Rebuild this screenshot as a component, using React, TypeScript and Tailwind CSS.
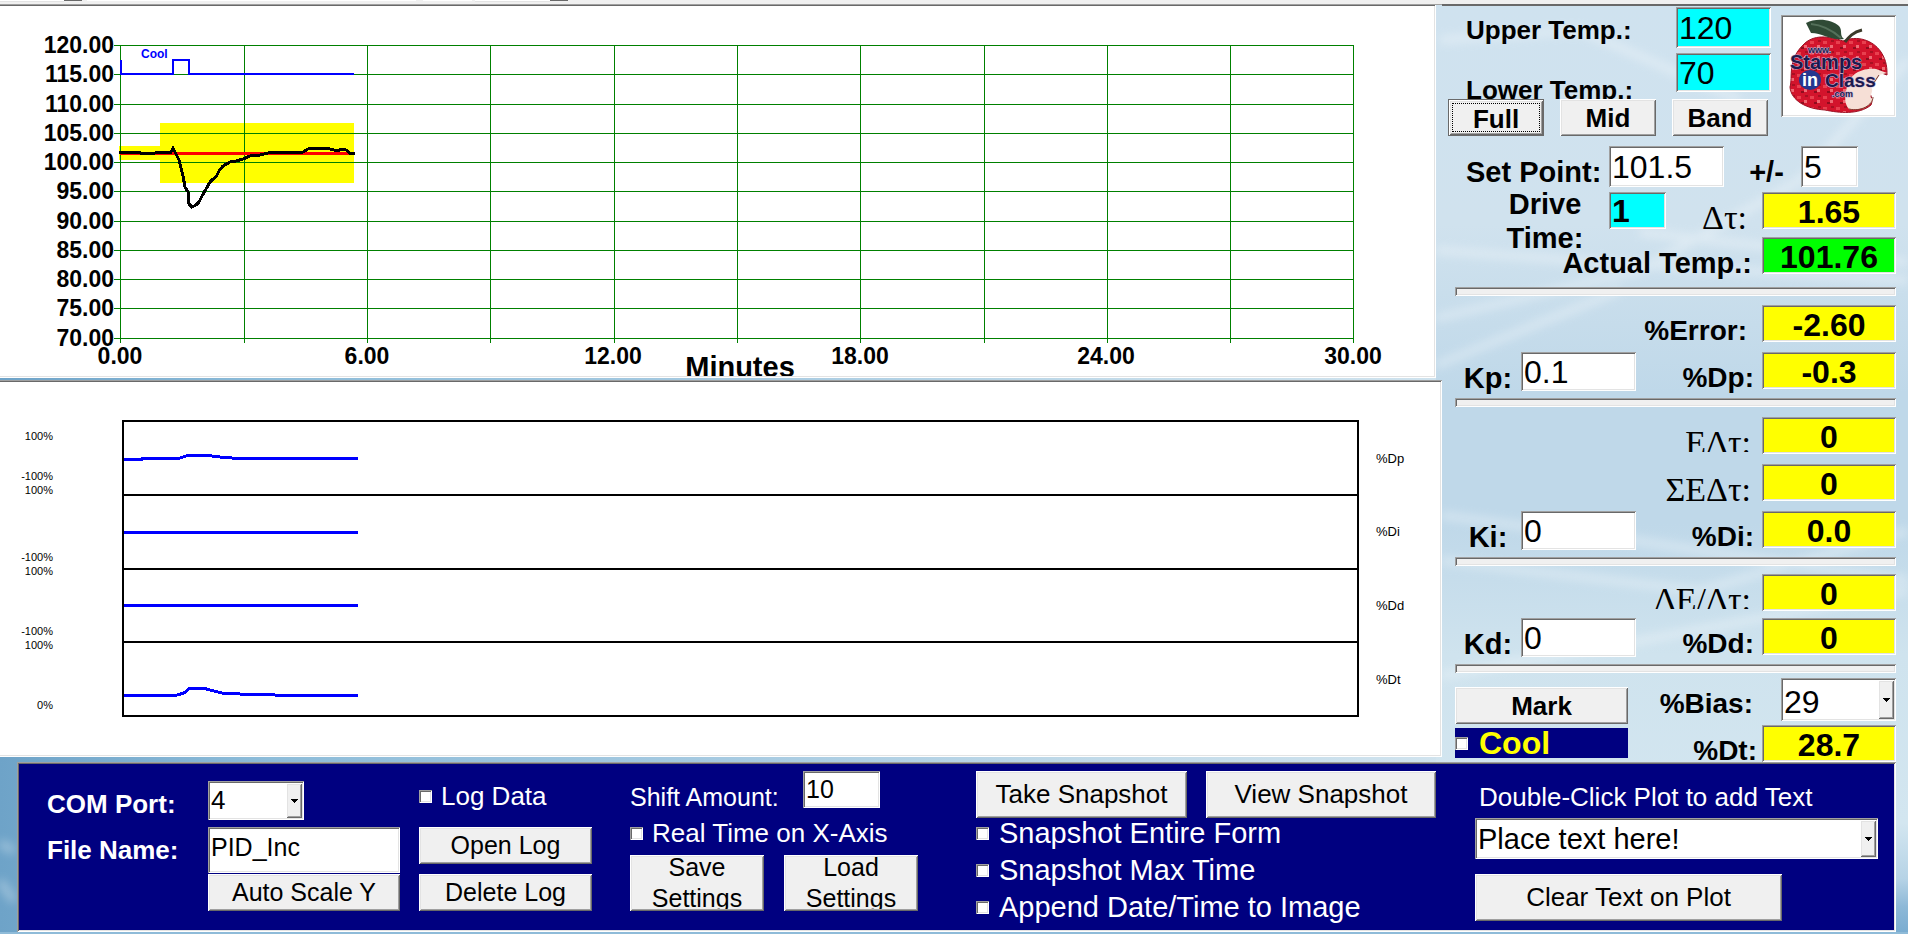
import { useState } from "react"
import type { ReactNode } from "react"
import { clsx } from "clsx"

// classic two-tone window edges
const sunken =
  "shadow-[inset_1px_1px_0_#a0a0a0,inset_-1px_-1px_0_#ffffff,inset_2px_2px_0_#696969,inset_-2px_-2px_0_#e3e3e3]"
const raised =
  "shadow-[inset_1px_1px_0_#ffffff,inset_-1px_-1px_0_#696969,inset_2px_2px_0_#e3e3e3,inset_-2px_-2px_0_#a0a0a0]"

const yTicks = [120, 115, 110, 105, 100, 95, 90, 85, 80, 75, 70]
const xTicks = [0, 3, 6, 9, 12, 15, 18, 21, 24, 27, 30]

const driveBands = [
  { label: "%Dp", y: 458 },
  { label: "%Di", y: 531 },
  { label: "%Dd", y: 605 },
  { label: "%Dt", y: 679 },
]

const driveScale = [
  { label: "100%", y: 439 },
  { label: "-100%", y: 479 },
  { label: "100%", y: 493 },
  { label: "-100%", y: 560 },
  { label: "100%", y: 574 },
  { label: "-100%", y: 634 },
  { label: "100%", y: 648 },
  { label: "0%", y: 708 },
]

function Backdrop() {
  return (
    <svg
      className="absolute inset-0 -z-10 h-full w-full"
      viewBox="0 0 1908 934"
      preserveAspectRatio="none"
      aria-hidden="true"
    >
      <defs>
        <linearGradient id="across" x1="0" x2="1" y1="0" y2="0">
          <stop offset="0%" stopColor="#6ea3c8" />
          <stop offset="14%" stopColor="#8dbcd9" />
          <stop offset="38%" stopColor="#a6cae1" />
          <stop offset="60%" stopColor="#c4dcea" />
          <stop offset="76%" stopColor="#d0e3ee" />
          <stop offset="100%" stopColor="#cfe2ee" />
        </linearGradient>
        <linearGradient id="down" x1="0" x2="0" y1="0" y2="1">
          <stop offset="0%" stopColor="#cfe2ef" />
          <stop offset="24%" stopColor="#d0e2ee" />
          <stop offset="42%" stopColor="#bfd8e9" />
          <stop offset="56%" stopColor="#bfd8e9" />
          <stop offset="70%" stopColor="#cfe3ee" />
          <stop offset="88%" stopColor="#d3e6f0" />
          <stop offset="94%" stopColor="#b6d3e6" />
          <stop offset="97%" stopColor="#8db8d7" />
          <stop offset="100%" stopColor="#78abd0" />
        </linearGradient>
        <filter id="soft" x="-10%" y="-10%" width="120%" height="120%">
          <feGaussianBlur stdDeviation="5" />
        </filter>
      </defs>
      <rect width="1908" height="934" fill="url(#across)" />
      <rect x="1436" width="472" height="934" fill="url(#down)" />
      <rect y="931" width="1908" height="3" fill="#8fbbd8" />
      <g filter="url(#soft)" fill="none" stroke="#ffffff" strokeWidth="8" opacity="0.32">
        <path d="M1436 318 L1640 270 L1800 180 L1908 60" />
        <path d="M1436 365 L1620 290" />
        <path d="M1440 40 L1580 30 L1740 100" />
        <path d="M1436 250 L1600 262 L1908 280" />
        <path d="M1640 232 L1908 262" />
        <path d="M1441 515 L1600 535 L1908 580" />
        <path d="M1441 560 L1700 590 L1908 530" />
        <path d="M1441 675 L1640 640 L1908 590" />
        <path d="M0 842 L14 850 M0 880 L14 900" />
      </g>
    </svg>
  )
}

function AppleLogo() {
  return (
    <svg viewBox="0 0 111 98" className="h-full w-full" role="img" aria-label="Stamps in Class">
      <defs>
        <pattern id="speckle" width="13" height="11" patternUnits="userSpaceOnUse">
          <rect width="13" height="11" fill="#d3142c" />
          <rect x="1" y="2" width="4" height="3" fill="#e8404f" />
          <rect x="8" y="6" width="3" height="3" fill="#ee6a74" />
          <rect x="5" y="8" width="3" height="2" fill="#8f0d1e" />
          <rect x="9" y="1" width="3" height="2" fill="#a81022" />
        </pattern>
      </defs>
      <path
        d="M20 28 C30 17 46 19 60 24 C74 18 90 23 98 35 C104 44 104 52 104 58 L96 55 C90 53 84 60 86 66 C82 72 92 80 88 88 C76 98 56 96 42 93 C24 92 8 84 7 70 C10 60 4 44 20 28 Z"
        fill="url(#speckle)"
        stroke="#9b1022"
      />
      <path
        d="M104 56 L93 52 C80 51 70 56 66 64 C62 74 60 86 66 92 C76 94 88 90 90 82 C84 80 92 75 88 70 C92 66 95 62 96 58 Z"
        fill="#f6dfd6"
      />
      <path d="M66 92 C78 95 90 88 90 80 M96 58 L88 70" fill="none" stroke="#7d3a2c" />
      <path d="M23 6 C34 0 50 3 56 9 C60 14 56 18 61 22 C48 24 40 16 28 16 Z" fill="#2f4a35" />
      <path d="M28 7 C40 8 50 14 58 21" fill="none" stroke="#54705a" strokeWidth="2" />
      <path d="M62 25 C66 20 70 15 79 13" fill="none" stroke="#3b3a2a" strokeWidth="3" />
      <g
        fontFamily="Liberation Sans, Arial, sans-serif"
        fontWeight="700"
        fill="#1c1a4e"
        stroke="#c7b6dc"
        strokeWidth="1"
        paintOrder="stroke"
      >
        <text x="25" y="36" fontSize="9">www.</text>
        <text x="7" y="52" fontSize="20">Stamps</text>
        <text x="42" y="70" fontSize="19">Class</text>
        <text x="49" y="80" fontSize="9">.com</text>
      </g>
      <ellipse cx="27" cy="63" rx="11" ry="10" fill="#26368f" />
      <text
        x="27"
        y="69"
        textAnchor="middle"
        fontSize="18"
        fontWeight="700"
        fontFamily="Liberation Sans, Arial, sans-serif"
        fill="#ffffff"
      >
        in
      </text>
    </svg>
  )
}

function TemperaturePlot() {
  return (
    <svg
      viewBox="0 4 1436 374"
      className="block h-auto w-full overflow-hidden"
      fontFamily="Liberation Sans, Arial, sans-serif"
      fontWeight="700"
      role="img"
      aria-label="Temperature plot"
    >
      <g shapeRendering="crispEdges">
        <rect x="119" y="146" width="41" height="14" fill="#ffff00" />
        <rect x="160" y="123" width="194" height="60" fill="#ffff00" />
        <g stroke="#008000" strokeWidth="1">
          {yTicks.map((t, i) => {
            const y = Math.round(45 + i * 29.25) + 0.5
            return <line key={t} x1="114" x2="1354" y1={y} y2={y} />
          })}
          {xTicks.map((t, i) => {
            const x = Math.ceil(120 + i * 123.3) + 0.5
            return <line key={t} x1={x} x2={x} y1="45" y2="343" />
          })}
        </g>
        <polyline
          points="121,60 121,74 173,74 173,60 189,60 189,74 354,74"
          fill="none"
          stroke="#0000ff"
          strokeWidth="2"
        />
        <line x1="120" x2="355" y1="153.5" y2="153.5" stroke="#ff0000" strokeWidth="3" />
        <polyline
          points="119,152 138,152 143,154 147,153 150,154 155,153 162,152 171,152 173,148 175,152 179,160 181,168 183,176 185,187 188,192 189,204 192,207 196,205 199,202 202,196 206,189 210,182 213,179 216,177 219,171 223,166 230,162 236,161 243,159 250,156 260,155 268,153 275,152 303,152 308,149 318,148 330,149 338,151 341,149 346,150 350,153 355,153"
          fill="none"
          stroke="#000000"
          strokeWidth="3"
        />
      </g>
      <text x="141" y="58" fontSize="12" fill="#0000ff">Cool</text>
      <g fontSize="23" textAnchor="end">
        {yTicks.map((t, i) => (
          <text key={t} x="114" y={Math.round(53 + i * 29.25)}>{t.toFixed(2)}</text>
        ))}
      </g>
      <g fontSize="23" textAnchor="middle">
        {xTicks.filter((t) => t % 6 === 0).map((t) => (
          <text key={t} x={Math.round(120 + t * 41.1)} y="364">{t.toFixed(2)}</text>
        ))}
      </g>
      {/* the axis title runs past the lower edge of the plot */}
      <svg x="600" y="340" width="300" height="36">
        <text x="140" y="37" fontSize="29" textAnchor="middle">Minutes</text>
      </svg>
    </svg>
  )
}

function DrivePlot() {
  return (
    <svg
      viewBox="0 379 1442 377"
      className="block h-auto w-full"
      fontFamily="Liberation Sans, Arial, sans-serif"
      role="img"
      aria-label="Drive plot"
    >
      <g fill="none" stroke="#000000" strokeWidth="2" shapeRendering="crispEdges">
        <rect x="123" y="420" width="1235" height="295" />
        <path d="M123 494 H1358 M123 568 H1358 M123 641 H1358" />
      </g>
      <g fill="none" stroke="#0000ff" strokeWidth="3" shapeRendering="crispEdges">
        <polyline points="124,458 142,458 143,457 180,457 186,455 190,454 207,454 212,455 220,456 232,457 358,457" />
        <path d="M124 531.5 H358 M124 604.5 H358" />
        <polyline points="124,694 177,694 184,692 190,687 203,687 210,689 222,692 240,693 275,694 358,694" />
      </g>
      <g fontSize="11" textAnchor="end">
        {driveScale.map((s) => (
          <text key={s.y} x="53" y={s.y}>{s.label}</text>
        ))}
      </g>
      <g fontSize="13">
        {driveBands.map((b) => (
          <text key={b.label} x="1376" y={b.y + 4}>{b.label}</text>
        ))}
      </g>
    </svg>
  )
}

function Btn({ children, className }: { children: ReactNode; className?: string }) {
  return (
    <button
      type="button"
      className={clsx("overflow-hidden bg-[#f0f0f0] text-black", raised, className)}
    >
      {children}
    </button>
  )
}

function Field({ id, value, className }: { id: string; value: string; className?: string }) {
  return (
    <input
      id={id}
      type="text"
      defaultValue={value}
      className={clsx("min-w-0 rounded-none pl-[3px] text-black outline-none", sunken, className)}
    />
  )
}

function Combo({
  id,
  options,
  className,
  textClass,
}: {
  id: string
  options: string[]
  className?: string
  textClass: string
}) {
  return (
    <div className={clsx("relative bg-white", sunken, className)}>
      <select
        id={id}
        className={clsx(
          "h-full w-full appearance-none bg-transparent pr-5 pl-[3px] text-black outline-none",
          textClass
        )}
      >
        {options.map((o) => (
          <option key={o}>{o}</option>
        ))}
      </select>
      <span
        className={clsx(
          "pointer-events-none absolute inset-y-[2px] right-[2px] flex w-4 items-center justify-center bg-[#f0f0f0]",
          raised
        )}
      >
        <svg width="7" height="4" viewBox="0 0 7 4" shapeRendering="crispEdges">
          <path d="M0 0 H7 L3.500 4 Z" />
        </svg>
      </span>
    </div>
  )
}

function Check({
  label,
  className,
  boxClass,
}: {
  label: string
  className?: string
  boxClass?: string
}) {
  const [on, setOn] = useState(false)
  return (
    <label className={clsx("flex items-center whitespace-nowrap", className)}>
      <input
        type="checkbox"
        checked={on}
        onChange={(e) => setOn(e.target.checked)}
        className={clsx(
          "size-[13px] shrink-0 appearance-none bg-white checked:bg-gray-500",
          sunken,
          boxClass
        )}
      />
      {label}
    </label>
  )
}

function Readout({
  id,
  label,
  value,
  labelClass = "pr-2 text-[28px]",
  green,
  clip,
}: {
  id: string
  label: string
  value: string
  labelClass?: string
  green?: boolean
  clip?: boolean
}) {
  return (
    <>
      <label
        htmlFor={id}
        className={clsx(
          "flex-1 pt-[10px] text-right leading-8 whitespace-nowrap",
          labelClass,
          clip ? "h-[35px] overflow-hidden" : "h-[37px]"
        )}
      >
        {label}
      </label>
      <output
        id={id}
        className={clsx(
          "h-[37px] w-[134px] shrink-0 pt-[2px] text-center text-[32px] leading-[37px]",
          green ? "bg-[#00ff00]" : "bg-[#ffff00]",
          sunken
        )}
      >
        {value}
      </output>
    </>
  )
}

const greek = "pr-[11px] font-['Liberation_Serif',serif] text-[34px] font-normal"

function Gain({ id, label, value }: { id: string; label: string; value: string }) {
  return (
    <>
      <label htmlFor={id} className="w-[66px] pt-[10px] text-center text-[29px] leading-8">
        {label}
      </label>
      <Field id={id} value={value} className="h-[39px] w-[115px] bg-white text-[32px] font-normal" />
    </>
  )
}

function Row({ children }: { children: ReactNode }) {
  return <div className="flex h-[37px] items-start">{children}</div>
}

function Divider() {
  return <div className={clsx("h-[9px] bg-[#f0f0f0]", sunken)} />
}

function SidePanel() {
  return (
    <aside className="w-[466px] shrink-0 pt-px font-bold">
      <div className="flex justify-between pr-3 pl-[6px]">
        <div className="w-[323px]">
          <div className="mb-[5px] flex h-[41px] justify-between pl-[18px]">
            <label htmlFor="upper" className="pt-[7px] text-[26px] leading-8">Upper Temp.:</label>
            <Field id="upper" value="120" className="w-[95px] bg-[#00ffff] text-[32px] font-normal" />
          </div>
          <div className="flex h-[46px] items-start justify-between overflow-hidden pl-[18px]">
            <label htmlFor="lower" className="pt-[21px] text-[26px] leading-8">Lower Temp.:</label>
            <Field id="lower" value="70" className="h-[39px] w-[95px] bg-[#00ffff] text-[32px] font-normal" />
          </div>
          <div className="flex h-[37px] gap-4 text-[26px]">
            <Btn className="w-24 border border-[#696969] outline-1 -outline-offset-[5px] outline-black outline-dotted">
              Full
            </Btn>
            <Btn className="w-24">Mid</Btn>
            <Btn className="w-24">Band</Btn>
          </div>
        </div>
        <div className={clsx("mt-2 h-[102px] w-[115px] bg-white p-[2px]", sunken)}>
          <AppleLogo />
        </div>
      </div>

      <div className="pr-3 pl-[13px]">
        <div className="mt-[10px] flex h-[41px]">
          <label htmlFor="setpoint" className="w-[154px] pt-[10px] pl-[11px] text-[29px] leading-8">
            Set Point:
          </label>
          <Field id="setpoint" value="101.5" className="w-[115px] bg-white text-[32px] font-normal" />
          <label htmlFor="band" className="flex-1 pt-[10px] pl-2 text-center text-[29px] leading-8">
            +/-
          </label>
          <Field id="band" value="5" className="mr-[38px] w-[57px] bg-white text-[32px] font-normal" />
        </div>
        <div className="flex h-[42px] items-end">
          <label
            htmlFor="drive"
            className="w-[154px] self-start pl-[26px] text-center text-[29px] leading-[34px]"
          >
            Drive Time:
          </label>
          <Field id="drive" value="1" className="h-[37px] w-[57px] bg-[#00ffff] text-[32px]" />
          <Readout
            id="dtau"
            label="Δτ:"
            value="1.65"
            labelClass="pr-[15px] font-['Liberation_Serif',serif] text-[34px] font-normal"
          />
        </div>
        <div className="mt-2 mb-[13px]">
          <Row>
            <Readout
              id="actual"
              label="Actual Temp.:"
              value="101.76"
              labelClass="pr-[10px] text-[29px]"
              green
            />
          </Row>
        </div>
        <Divider />
        <div className="flex flex-col gap-[10px] py-[9px]">
          <Row>
            <Readout id="error" label="%Error:" value="-2.60" labelClass="pr-[15px] text-[28px]" />
          </Row>
          <Row>
            <Gain id="kp" label="Kp:" value="0.1" />
            <Readout id="dp" label="%Dp:" value="-0.3" />
          </Row>
        </div>
        <Divider />
        <div className="flex flex-col gap-[10px] pt-[10px] pb-[9px]">
          <Row>
            <Readout id="edt" label="EΔτ:" value="0" labelClass={greek} clip />
          </Row>
          <Row>
            <Readout id="sedt" label="ΣEΔτ:" value="0" labelClass={greek} />
          </Row>
          <Row>
            <Gain id="ki" label="Ki:" value="0" />
            <Readout id="di" label="%Di:" value="0.0" />
          </Row>
        </div>
        <Divider />
        <div className="flex flex-col gap-[7px] pt-2 pb-[9px]">
          <Row>
            <Readout id="dedt" label="ΔE/Δτ:" value="0" labelClass={greek} clip />
          </Row>
          <Row>
            <Gain id="kd" label="Kd:" value="0" />
            <Readout id="dd" label="%Dd:" value="0" />
          </Row>
        </div>
        <Divider />
        <div className="mt-[5px] flex h-[43px] items-start">
          <Btn className="mt-[9px] h-[37px] w-[173px] text-[26px]">Mark</Btn>
          <label htmlFor="bias" className="flex-1 pt-[10px] pr-7 text-right text-[28px] leading-8">
            %Bias:
          </label>
          <Combo
            id="bias"
            options={["29", "30", "31"]}
            className="h-[43px] w-[115px]"
            textClass="text-[32px] font-normal"
          />
        </div>
        <div className="mt-1 flex h-[37px] items-start overflow-hidden">
          <Check
            label="Cool"
            className="mt-[3px] h-[30px] w-[173px] bg-[#000080] text-[32px] leading-[30px] text-[#ffff00]"
            boxClass="mr-[11px]"
          />
          <Readout id="dt" label="%Dt:" value="28.7" labelClass="pr-[5px] text-[28px]" />
        </div>
      </div>
    </aside>
  )
}

function ControlPanel() {
  return (
    <section
      className={clsx(
        "mr-3 mb-[3px] ml-[17px] grid h-[170px] grid-cols-[minmax(0,161fr)_minmax(0,211fr)_minmax(0,211fr)_minmax(0,346fr)_minmax(0,499fr)_minmax(0,403fr)] bg-[#000080] pt-[9px] pr-[18px] pl-[30px] text-[26px] text-white",
        sunken
      )}
    >
      <div className="flex flex-col gap-[14px] pt-[17px] font-bold leading-8 whitespace-nowrap">
        <label htmlFor="port">COM Port:</label>
        <label htmlFor="file">File Name:</label>
      </div>

      <div className="flex flex-col pt-[10px] pr-[19px] text-[25px]">
        <Combo id="port" options={["4", "5", "6"]} className="mb-[7px] h-[39px] w-24" textClass="text-[26px]" />
        <Field id="file" value="PID_Inc" className="mb-px h-[46px] bg-white pb-[6px]" />
        <Btn className="h-[37px]">Auto Scale Y</Btn>
      </div>

      <div className="flex flex-col pt-[9px] pr-[38px] text-[25px]">
        <Check label="Log Data" className="mb-[15px] h-8 text-[26px]" boxClass="mr-[9px]" />
        <Btn className="mb-[10px] h-[37px]">Open Log</Btn>
        <Btn className="h-[37px]">Delete Log</Btn>
      </div>

      <div className="pr-[58px] text-[25px]">
        <div className="mb-[9px] flex h-[37px]">
          <label htmlFor="shift" className="w-[173px] pt-[10px] leading-8">Shift Amount:</label>
          <Field id="shift" value="10" className="w-[77px] bg-white" />
        </div>
        <Check label="Real Time on X-Axis" className="mb-[6px] h-8 text-[26px]" boxClass="mr-[9px]" />
        <div className="flex gap-5 leading-[31px]">
          <Btn className="h-[56px] w-[134px] p-[2px]">
            <span className="flex h-[52px] items-center overflow-hidden px-2">Save Settings</span>
          </Btn>
          <Btn className="h-[56px] w-[134px] p-[2px]">
            <span className="flex h-[52px] items-center overflow-hidden px-2">Load Settings</span>
          </Btn>
        </div>
      </div>

      <div className="pr-[39px]">
        <div className="-mb-[3px] flex gap-[19px]">
          <Btn className="h-[47px] flex-[211]">Take Snapshot</Btn>
          <Btn className="h-[47px] flex-[230]">View Snapshot</Btn>
        </div>
        <div className="text-[29px] leading-[37px]">
          <Check label="Snapshot Entire Form" boxClass="mr-[10px]" />
          <Check label="Snapshot Max Time" boxClass="mr-[10px]" />
          <Check label="Append Date/Time to Image" boxClass="mr-[10px]" />
        </div>
      </div>

      <div>
        <label htmlFor="note" className="block h-[47px] pt-[10px] pl-[4px] leading-8 whitespace-nowrap">
          Double-Click Plot to add Text
        </label>
        <Combo
          id="note"
          options={["Place text here!"]}
          className="mb-[15px] h-[41px]"
          textClass="text-[29px]"
        />
        <Btn className="h-[47px] w-[307px]">Clear Text on Plot</Btn>
      </div>
    </section>
  )
}

export default function App() {
  return (
    <div className="relative isolate min-h-screen overflow-hidden font-['Liberation_Sans',Arial,sans-serif] text-black">
      <Backdrop />
      <div className="flex h-[5px] items-start border-b border-[#a0a0a0] bg-[#f0f0f0]">
        <div className="h-[2px] w-16 border-b border-[#e3e3e3] bg-white" />
        <div className="h-px w-[18px] bg-[#696969]" />
        <div className="ml-[5px] h-px w-[329px] bg-white" />
        <div className="ml-[7px] h-px w-[49px] bg-white" />
        <div className="ml-[3px] h-[2px] w-[75px] border-b border-[#e3e3e3] bg-white" />
        <div className="h-px w-[18px] bg-[#696969]" />
      </div>
      <div className="-mt-px flex">
        <main className="min-w-0 flex-1">
          <div className="mr-[6px] mb-[2px] bg-white shadow-[inset_0_1px_0_#a0a0a0,inset_-1px_-1px_0_#ffffff,inset_0_2px_0_#696969,inset_-2px_-2px_0_#e3e3e3]">
            <TemperaturePlot />
          </div>
          <div className="bg-white shadow-[inset_0_1px_0_#a0a0a0,inset_-1px_-1px_0_#ffffff,inset_0_2px_0_#696969,inset_-2px_-2px_0_#e3e3e3]">
            <DrivePlot />
          </div>
        </main>
        <div className="flex shrink-0 border-t-2 border-[#696969]">
          <SidePanel />
        </div>
      </div>
      <ControlPanel />
    </div>
  )
}
